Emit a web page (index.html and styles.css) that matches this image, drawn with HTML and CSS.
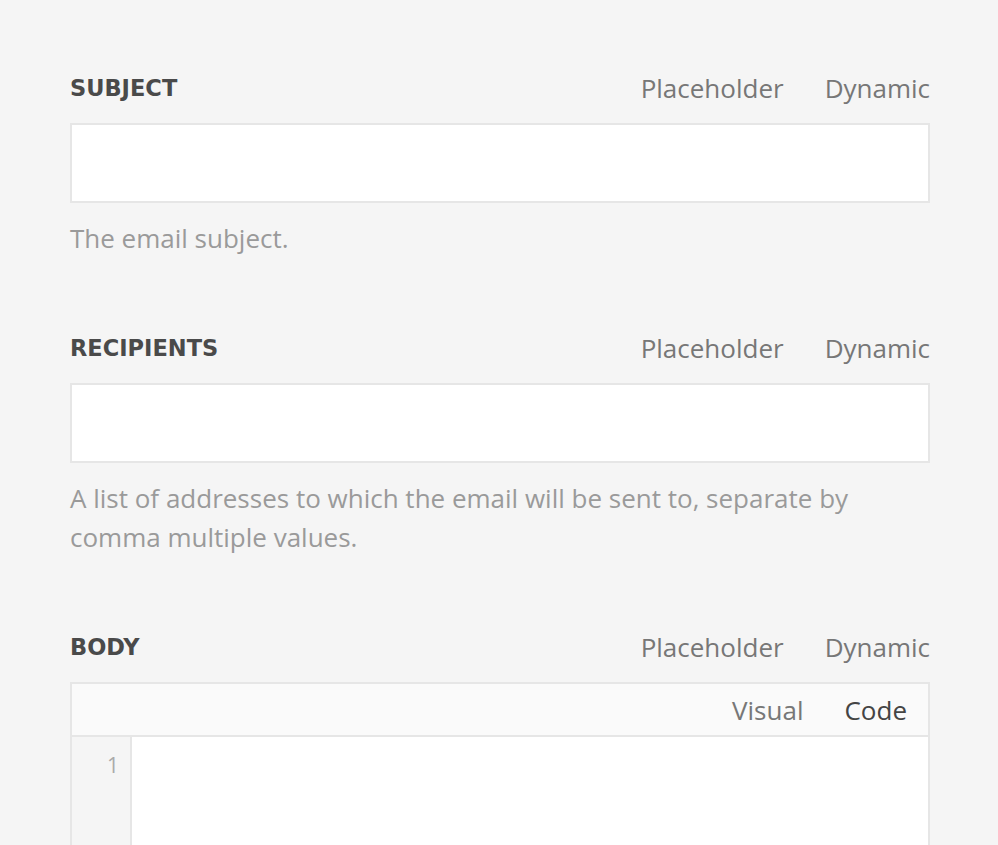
FILE: index.html
```html
<!DOCTYPE html>
<html>
<head>
<meta charset="utf-8">
<link rel="stylesheet" href="styles.css">
</head>
<body>
<div class="form">
  <div class="field">
    <div class="field-head">
      <span class="label">SUBJECT</span>
      <div class="modes"><span>Placeholder</span><span>Dynamic</span></div>
    </div>
    <div class="input"></div>
    <p class="help">The email subject.</p>
  </div>
  <div class="field">
    <div class="field-head">
      <span class="label">RECIPIENTS</span>
      <div class="modes"><span>Placeholder</span><span>Dynamic</span></div>
    </div>
    <div class="input"></div>
    <p class="help">A list of addresses to which the email will be sent to, separate by comma multiple values.</p>
  </div>
  <div class="field">
    <div class="field-head">
      <span class="label">BODY</span>
      <div class="modes"><span>Placeholder</span><span>Dynamic</span></div>
    </div>
    <div class="editor">
      <div class="toolbar"><span class="tab">Visual</span><span class="tab active">Code</span></div>
      <div class="code">
        <div class="gutter"><span>1</span></div>
        <div class="lines"></div>
      </div>
    </div>
  </div>
</div>
</body>
</html>
```
FILE: styles.css
```css
html, body {
  margin: 0;
  padding: 0;
  background: #f5f5f5;
  font-family: "Open Sans", "Liberation Sans", sans-serif;
}
.form {
  padding: 73px 68px 0 70px;
  display: flex;
  flex-direction: column;
  gap: 75px;
}
.field-head {
  display: flex;
  align-items: center;
  justify-content: space-between;
  height: 30px;
  margin-bottom: 20px;
}
.label {
  font-family: "DejaVu Sans", "Liberation Sans", sans-serif;
  font-weight: bold;
  font-size: 22.5px;
  color: #4a4a4a;
}
.modes {
  display: flex;
  gap: 41px;
  font-size: 26px;
  color: #777;
}
.input {
  height: 76px;
  background: #fff;
  border: 2px solid #e6e6e6;
}
.help {
  margin: 16px 0 0;
  font-size: 26px;
  line-height: 39px;
  color: #9a9a9a;
}
.editor {
  border: 2px solid #e6e6e6;
  background: #fff;
  height: 300px;
}
.toolbar {
  height: 51px;
  background: #fafafa;
  border-bottom: 2px solid #e6e6e6;
  display: flex;
  justify-content: flex-end;
  align-items: center;
  gap: 41px;
  padding-right: 21px;
  font-size: 26px;
  color: #777;
}
.tab.active {
  color: #444;
}
.code {
  display: flex;
  height: 100%;
}
.gutter {
  width: 60px;
  background: #f5f5f5;
  border-right: 2px solid #e6e6e6;
  text-align: right;
  padding-top: 14px;
  padding-right: 11px;
  box-sizing: border-box;
  font-size: 21px;
  color: #aaa;
}
.lines {
  flex: 1;
}
```
